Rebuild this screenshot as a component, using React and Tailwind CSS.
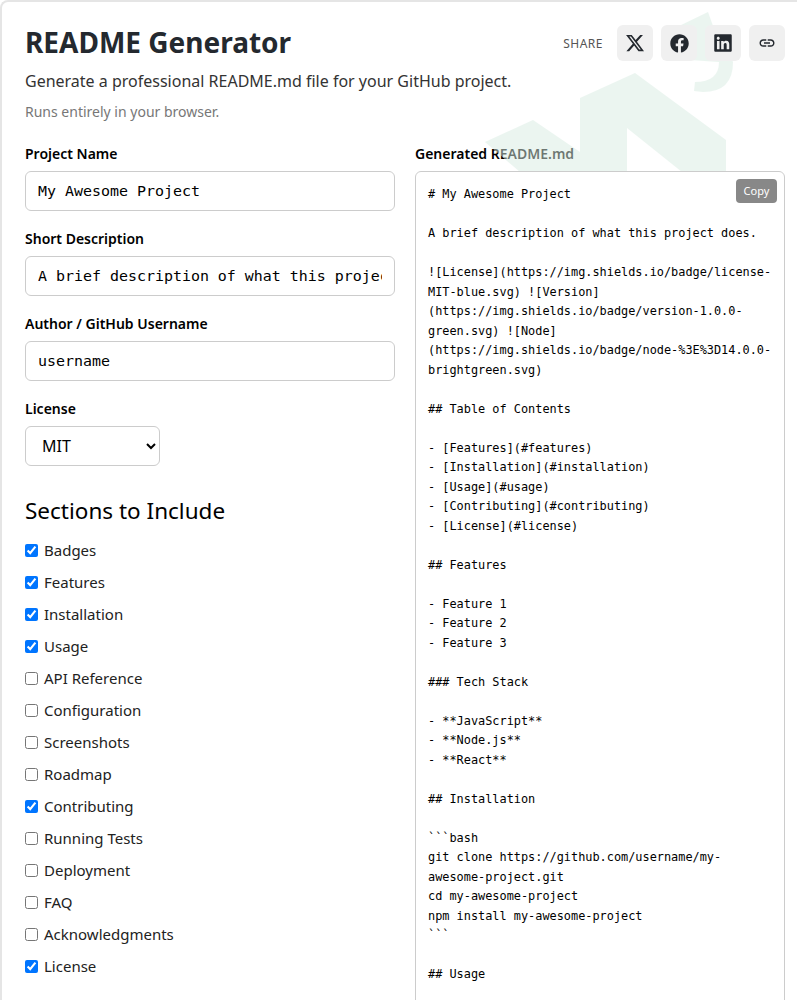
import { FaFacebook, FaLinkedin } from 'react-icons/fa'
import { FaXTwitter } from 'react-icons/fa6'
import { MdLink } from 'react-icons/md'

const sections = [
  ['Badges', true],
  ['Features', true],
  ['Installation', true],
  ['Usage', true],
  ['API Reference', false],
  ['Configuration', false],
  ['Screenshots', false],
  ['Roadmap', false],
  ['Contributing', true],
  ['Running Tests', false],
  ['Deployment', false],
  ['FAQ', false],
  ['Acknowledgments', false],
  ['License', true],
]

const output = `# My Awesome Project

A brief description of what this project does.

![License](https://img.shields.io/badge/license-MIT-blue.svg) ![Version](https://img.shields.io/badge/version-1.0.0-green.svg) ![Node](https://img.shields.io/badge/node-%3E%3D14.0.0-brightgreen.svg)

## Table of Contents

- [Features](#features)
- [Installation](#installation)
- [Usage](#usage)
- [Contributing](#contributing)
- [License](#license)

## Features

- Feature 1
- Feature 2
- Feature 3

### Tech Stack

- **JavaScript**
- **Node.js**
- **React**

## Installation

\`\`\`bash
git clone https://github.com/username/my-awesome-project.git
cd my-awesome-project
npm install my-awesome-project
\`\`\`

## Usage

`

function Field({ label, value }) {
  return (
    <div className="mb-[18px]">
      <label className="mb-2 block text-[14px] leading-[19px] font-semibold text-black">{label}</label>
      <input
        readOnly
        value={value}
        className="block h-10 w-full rounded-md border border-[#ccc] bg-white px-3 font-['DejaVu_Sans_Mono',monospace] text-[14.95px] text-black"
      />
    </div>
  )
}

function ShareButton({ children }) {
  return <button className="relative z-[2] flex h-9 w-9 items-center justify-center rounded-md bg-[#f0f0f0] text-[#24292f]">{children}</button>
}

export default function App() {
  return (
    <div className="relative h-[1000px] overflow-hidden rounded-tl-lg border-t-2 border-l-2 border-[#e5e5e5] bg-white pt-[23px] pr-3 pl-[23px] font-['Noto_Sans',sans-serif]">
      <div className="relative">
        <div className="flex items-start justify-between">
          <h1 className="text-[28px] leading-[34px] font-bold text-[#24292f]">README Generator</h1>
          <div className="flex items-center gap-2">
            <span className="mt-[2px] mr-[6px] text-[12px] tracking-[0.5px] text-[#555]">SHARE</span>
            <ShareButton><FaXTwitter size={20} /></ShareButton>
            <ShareButton><FaFacebook size={19} /></ShareButton>
            <ShareButton><FaLinkedin size={20} /></ShareButton>
            <ShareButton><MdLink size={18} /></ShareButton>
          </div>
        </div>
        <p className="mt-[9px] text-[16px] leading-[22px] text-[#333]">Generate a professional README.md file for your GitHub project.</p>
        <p className="mt-[10px] text-[14px] leading-[19px] text-[#777]">Runs entirely in your browser.</p>

        <div className="mt-[23px] flex gap-5">
          <div className="w-[370px] shrink-0">
            <Field label="Project Name" value="My Awesome Project" />
            <Field label="Short Description" value="A brief description of what this project does." />
            <Field label="Author / GitHub Username" value="username" />
            <label className="mb-2 block text-[14px] leading-[19px] font-semibold text-black">License</label>
            <select className="block h-10 w-[135px] rounded-md border border-[#ccc] bg-white px-3 text-[16px] text-black">
              <option>MIT</option>
            </select>
            <h2 className="mt-[28px] mb-[7px] text-[22.5px] leading-[33px] font-normal text-black">Sections to Include</h2>
            <div className="flex flex-col">
              {sections.map(([name, checked]) => (
                <label key={name} className="flex h-8 items-center gap-[6px] text-[15px] text-[#222]">
                  <input type="checkbox" readOnly checked={checked} className="m-0 h-[13px] w-[13px]" />
                  {name}
                </label>
              ))}
            </div>
          </div>

          <div className="w-[370px] shrink-0">
            <label className="mb-2 block text-[14px] leading-[19px] font-semibold text-black">Generated README.md</label>
            <div className="relative z-[2] h-[900px] rounded-md border border-[#ccc] bg-white px-3 pt-[13px]">
              <button className="absolute top-[7px] right-[7px] h-6 w-[41px] rounded bg-[#888] text-[11px] text-white">Copy</button>
              <pre className="font-['DejaVu_Sans_Mono',monospace] text-[11.88px] leading-[19.5px] break-words whitespace-pre-wrap text-black">{output}</pre>
            </div>
          </div>
        </div>
      </div>

      {/* watermark sits over the label text, which is why README.md looks washed out */}
      <svg className="pointer-events-none absolute top-[-2px] left-[-2px] z-[1] h-[200px] w-[797px] opacity-50" viewBox="0 0 797 200" fill="#d9ede3">
        <path d="M485 142 L533 120 L580 152 L580 98 L635 73 L726 140 L726 200 L682 172 L627 128 L627 200 L520 172 Z" />
        <path d="M675 28 L708 12 L713 26 L733 62 Q733 92 703 92 L694 91 L695 82 Q719 82 719 62 L690 60 Z" />
      </svg>
    </div>
  )
}
